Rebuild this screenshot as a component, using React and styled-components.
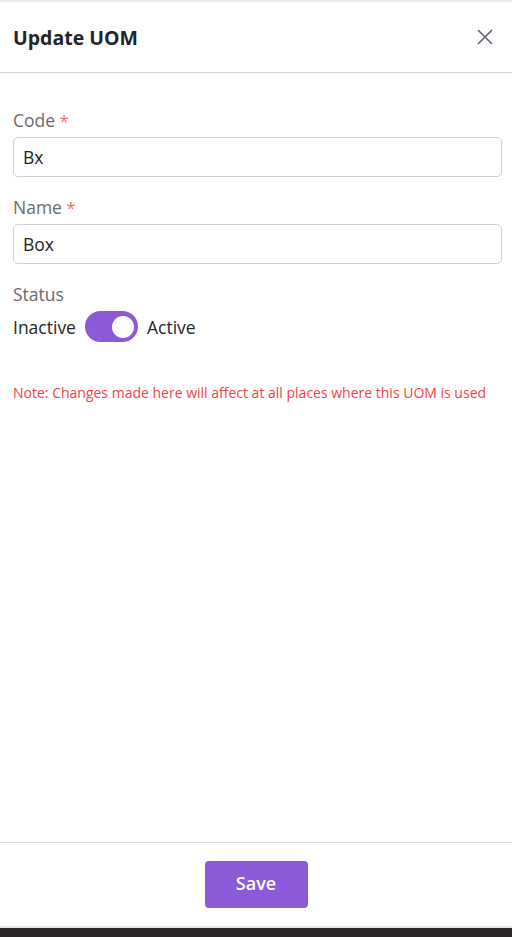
import { createGlobalStyle, styled } from "styled-components";

const GlobalStyle = createGlobalStyle`
  * {
    box-sizing: border-box;
  }
  html,
  body {
    margin: 0;
    padding: 0;
    background: #ffffff;
    font-family: "Open Sans", "Noto Sans", sans-serif;
  }
`;

function App() {
  return (
    <>
      <GlobalStyle />
      <Page>
        <Panel>
          <Header>
            <h2>Update UOM</h2>
            <CloseButton aria-label="Close">
              <svg width="16" height="16" viewBox="0 0 16 16">
                <path
                  d="M1.5 1.5 L14.5 14.5 M14.5 1.5 L1.5 14.5"
                  stroke="#5b6470"
                  strokeWidth="1.6"
                  strokeLinecap="round"
                />
              </svg>
            </CloseButton>
          </Header>

          <Body>
            <Field>
              <Label>
                Code <Required>*</Required>
              </Label>
              <Input defaultValue="Bx" />
            </Field>

            <Field>
              <Label>
                Name <Required>*</Required>
              </Label>
              <Input defaultValue="Box" />
            </Field>

            <Field>
              <Label>Status</Label>
              <ToggleRow>
                <span>Inactive</span>
                <Switch $on={true}>
                  <Knob />
                </Switch>
                <span>Active</span>
              </ToggleRow>
            </Field>

            <Note>
              Note: Changes made here will affect at all places where this UOM
              is used
            </Note>
          </Body>

          <Footer>
            <SaveButton>Save</SaveButton>
          </Footer>
        </Panel>
        <Strip />
      </Page>
    </>
  );
}

const Page = styled.div`
  height: 937px;
  display: flex;
  flex-direction: column;
  border-top: 2px solid #ececec;
`;

const Panel = styled.div`
  flex: 1;
  display: flex;
  flex-direction: column;
  background: #fff;
  border-bottom: 2px solid #e6e6e6;
`;

const Header = styled.div`
  height: 71px;
  padding: 0 13px;
  display: flex;
  align-items: center;
  justify-content: space-between;
  border-bottom: 1px solid #d3d5da;

  h2 {
    margin: 0;
    font-size: 19.5px;
    font-weight: 700;
    color: #222428;
  }
`;

const CloseButton = styled.button`
  border: none;
  background: none;
  padding: 0;
  margin-right: 6px;
  display: flex;
  cursor: pointer;
`;

const Body = styled.div`
  flex: 1;
  padding: 35px 10px 0 13px;
  display: flex;
  flex-direction: column;
  gap: 18px;
`;

const Field = styled.div`
  display: flex;
  flex-direction: column;
  gap: 5px;
`;

const Label = styled.label`
  display: block;
  height: 24px;
  font-size: 17.5px;
  line-height: 24px;
  color: #6b6b6b;
`;

const Required = styled.span`
  color: #f06a6a;
  font-size: 16px;
  line-height: 1;
`;

const Input = styled.input`
  width: 100%;
  height: 40px;
  padding: 0 9px;
  border: 1px solid #cfd1d6;
  border-radius: 5px;
  font-family: inherit;
  font-size: 17.5px;
  color: #1f1f1f;
  outline: none;
`;

const ToggleRow = styled.div`
  display: flex;
  align-items: center;
  gap: 9px;
  font-size: 17.5px;
  color: #252525;
  height: 31px;
`;

const Switch = styled.div`
  width: 53px;
  height: 31px;
  border-radius: 16px;
  background: ${(p) => (p.$on ? "#8c5ad9" : "#c9c9cf")};
  display: flex;
  align-items: center;
  justify-content: ${(p) => (p.$on ? "flex-end" : "flex-start")};
  padding: 0 4px;
`;

const Knob = styled.div`
  width: 22px;
  height: 22px;
  border-radius: 50%;
  background: #fff;
`;

const Note = styled.p`
  margin: 23px 0 0;
  font-size: 14px;
  color: #f2433f;
`;

const Footer = styled.div`
  height: 84px;
  border-top: 1px solid #d3d5da;
  display: flex;
  justify-content: center;
  padding-top: 18px;
`;

const SaveButton = styled.button`
  width: 103px;
  height: 47px;
  padding: 0 0 3px;
  border: none;
  border-radius: 4px;
  background: #8c5ad9;
  color: #fff;
  font-family: inherit;
  font-size: 18px;
  font-weight: 600;
  cursor: pointer;
`;

const Strip = styled.div`
  height: 9px;
  background: #2a2726;
`;

export default App;
